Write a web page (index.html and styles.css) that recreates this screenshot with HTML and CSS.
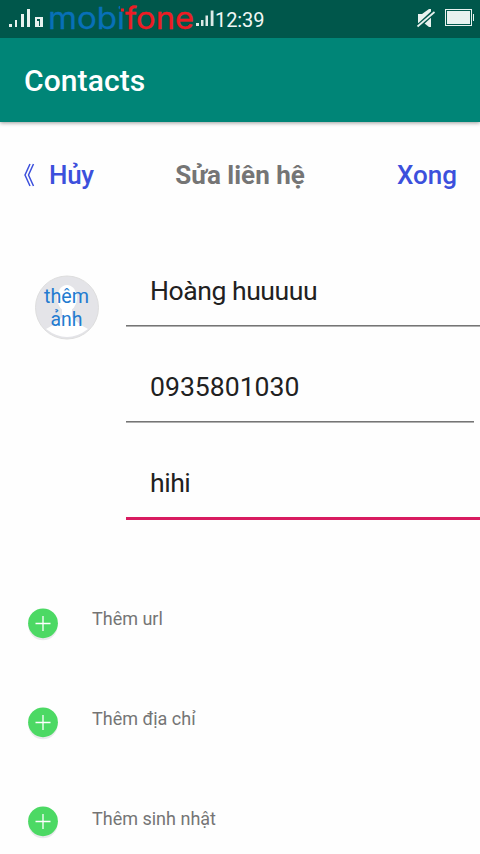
FILE: index.html
```html
<!DOCTYPE html>
<html lang="vi">
<head>
<meta charset="utf-8">
<title>Contacts</title>
<link rel="stylesheet" href="styles.css">
</head>
<body>
<div class="status">
  <svg class="status-left" width="47" height="38" fill="#e8f2ef" shape-rendering="crispEdges">
    <path d="M9 24h3v3H9zM15 20h2v7h-2zM21 14h3v13h-3zM27 9h3v18h-3zM35 17h8v10h-8z"/>
    <path d="M37 19h3v7h-1v-5h-2z" fill="#00574b"/>
  </svg>
  <svg class="brand" width="148" height="38" viewBox="47 0 148 38">
    <text class="brand-text mobi" x="48" y="28.700" textLength="77" lengthAdjust="spacingAndGlyphs">mobi</text>
    <path d="M120 5h5v5.500h-5z" fill="#00574b"/>
    <path d="M121 8.500h3v3h-3z" fill="#ed1c24"/>
    <text class="brand-text fone" x="125" y="28.700" textLength="69" lengthAdjust="spacingAndGlyphs">fone</text>
  </svg>
  <svg width="20" height="38" viewBox="195 0 20 38" fill="#dce9e6">
    <path d="M196 23h3v3h-3zM201 20h2.500v6h-2.500zM205.500 15.500h2.500V26h-2.500zM210.700 10.500h2.800V26h-2.800z"/>
  </svg>
  <span class="clock">12:39</span>
  <svg class="status-right" width="64" height="38" viewBox="416 0 64 38">
    <path d="M418 14h4l7-5h2v18h-2l-5-4h-6z" fill="#e8f2ef"/>
    <path d="M418 26.500L435 11" stroke="#00574b" stroke-width="4.500"/>
    <path d="M417.500 26.500L434.500 12" stroke="#e8f2ef" stroke-width="1.700"/>
    <rect x="445.500" y="9.500" width="26" height="16" fill="none" stroke="#e8f2ef"/>
    <path d="M447 11h23v13h-23zM473 14h1v7h-1z" fill="#e8f2ef"/>
  </svg>
</div>
<header class="appbar"><h1>Contacts</h1></header>
<nav class="toolbar">
  <a class="cancel"><svg width="12" height="26" fill="none" stroke="#3c50dc" stroke-width="1.500"><path d="M6 2L1 13l5 11M9.500 2L4.500 13l5 11"/></svg><span>Hủy</span></a>
  <h2>Sửa liên hệ</h2>
  <a class="done">Xong</a>
</nav>
<main>
  <section class="profile">
    <div class="avatar">
      <svg width="66" height="66" viewBox="0 0 66 66">
        <circle cx="33" cy="32.500" r="31.500" fill="#e4e4e8" stroke="#dedede"/>
        <ellipse cx="33" cy="23" rx="10" ry="13" fill="#fff"/>
        <path d="M28 31h10v12H28z" fill="#fff"/>
        <path d="M12 54Q22 49 28 42H38Q44 49 54 54Q33 70 12 54z" fill="#fff"/>
        <text class="avatar-text" x="32.500" y="27.500" textLength="45" lengthAdjust="spacingAndGlyphs">thêm</text>
        <text class="avatar-text" x="32.500" y="50.500" textLength="32" lengthAdjust="spacingAndGlyphs">ảnh</text>
      </svg>
    </div>
    <div class="fields">
      <div class="field">Hoàng huuuuu</div>
      <div class="field phone">0935801030</div>
      <div class="field focused">hihi</div>
    </div>
  </section>
  <ul class="actions">
    <li><svg class="plus"><use href="#plus"/></svg><span>Thêm url</span></li>
    <li><svg class="plus up"><use href="#plus"/></svg><span>Thêm địa chỉ</span></li>
    <li><svg class="plus up2"><use href="#plus"/></svg><span>Thêm sinh nhật</span></li>
  </ul>
</main>
<svg class="defs"><defs><g id="plus">
  <circle cx="16" cy="17.500" r="14.700" fill="#e9e9ec"/>
  <circle cx="16" cy="15.300" r="14.900" fill="#4cd964"/>
  <path d="M8.500 15.500h15M16 8v15" stroke="#fff" stroke-width="1.300"/>
</g></defs></svg>
</body>
</html>
```
FILE: styles.css
```css
* { box-sizing: border-box; margin: 0; padding: 0; }
body { width: 480px; height: 854px; overflow: hidden; background: #fefefe; font-family: Roboto, sans-serif; }
svg { display: block; flex: none; }
.status { position: relative; z-index: 1; display: flex; height: 38px; background: #00574b; }
.brand { overflow: visible; }
.brand-text { font: 400 30px Inter, sans-serif; stroke-width: .3px; }
.mobi { fill: #0870b8; stroke: #0870b8; }
.fone { fill: #ed1c24; stroke: #ed1c24; }
.clock { width: 50px; font-size: 20px; line-height: 40px; letter-spacing: -.1px; color: #f0f7f5; }
.status-right { margin-left: auto; }
.appbar { position: relative; height: 84px; padding-left: 24px; background: #008577; box-shadow: 0 1px 4px rgba(0, 0, 0, .4); }
.appbar h1 { font-size: 30px; font-weight: 500; line-height: 86px; letter-spacing: .1px; color: #fff; }
.toolbar { display: grid; grid-template-columns: 1fr auto 1fr; align-items: center; height: 106px; padding: 0 23px 0 24px; font-size: 26px; font-weight: 500; color: #3c50dc; }
.toolbar h2 { margin-left: -1px; font-size: 26px; font-weight: 700; color: #757575; }
.cancel { display: flex; align-items: center; gap: 13px; letter-spacing: -.3px; }
.done { justify-self: end; }
.profile { display: flex; height: 292px; }
.avatar { flex: none; width: 126px; padding: 47px 0 0 34px; }
.avatar-text { font: 400 19.500px Roboto, sans-serif; fill: #237bd0; text-anchor: middle; }
.fields { flex: 1; margin-top: 3px; }
.field { height: 96px; padding: 44px 0 0 24px; font-size: 26.600px; line-height: 31px; letter-spacing: -.47px; color: #212121; background: linear-gradient(#757575 1px, #b0b0b0 1px) left bottom / 100% 2px no-repeat; }
.field.phone { letter-spacing: 0; background-size: 348px 2px; }
.field.focused { height: 97px; background: linear-gradient(#d81b60, #d81b60) left bottom / 100% 3px no-repeat; }
.actions { list-style: none; padding-top: 85px; }
.actions li { display: flex; height: 100px; padding: 3px 0 0 27px; gap: 33px; font-size: 18px; line-height: 21px; color: #757575; }
.actions li:last-child { height: 49px; }
.plus { width: 32px; height: 33px; }
.up { margin-top: -1px; }
.up2 { margin-top: -2px; }
.defs { position: absolute; width: 0; height: 0; }
```
